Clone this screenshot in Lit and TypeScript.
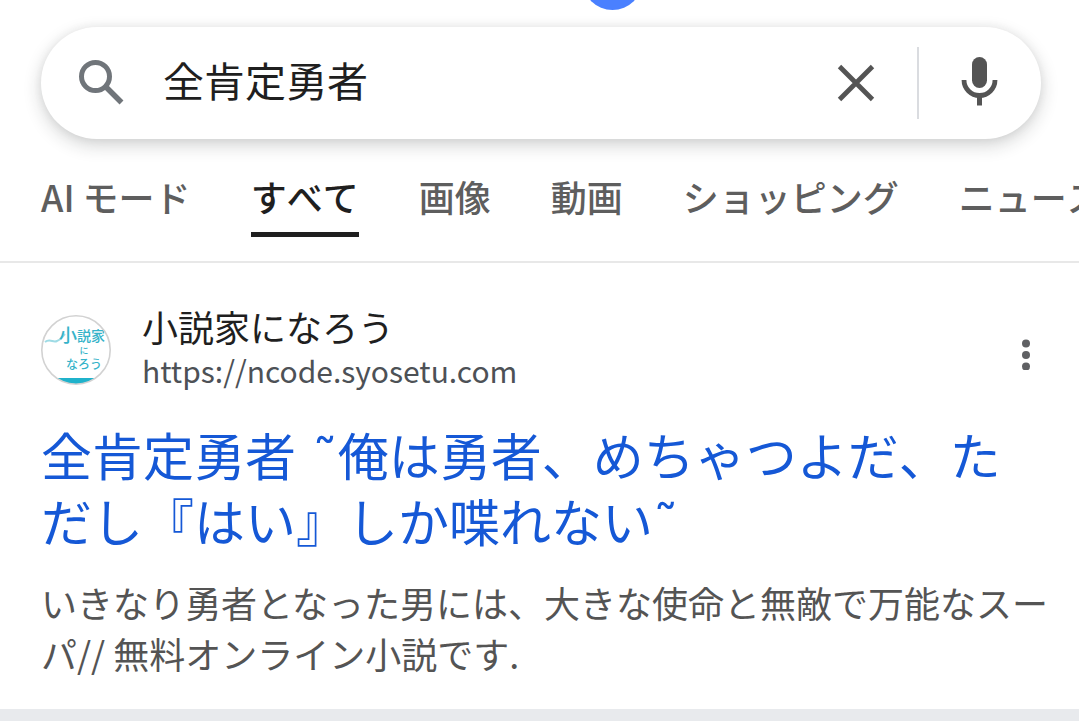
import { LitElement, html, css, svg } from "lit";
import { customElement, property, state } from "lit/decorators.js";

interface Tab {
  label: string;
  active?: boolean;
}

const TABS: Tab[] = [
  { label: "AI モード" },
  { label: "すべて", active: true },
  { label: "画像" },
  { label: "動画" },
  { label: "ショッピング" },
  { label: "ニュース" },
];

@customElement("search-box")
class SearchBox extends LitElement {
  @property() value = "";

  static styles = css`
    :host {
      display: block;
    }
    .box {
      display: flex;
      align-items: center;
      height: 112px;
      box-sizing: border-box;
      padding: 0 32px 0 36px;
      border-radius: 56px;
      background: #fff;
      box-shadow: 0 6px 18px rgba(32, 33, 36, 0.2), 0 0 10px rgba(32, 33, 36, 0.06);
    }
    .icon {
      display: block;
      flex: none;
    }
    .input {
      flex: 1;
      min-width: 0;
      height: 64px;
      margin: 0 0 0 36px;
      padding: 0 0 8px;
      box-sizing: border-box;
      border: 0;
      outline: 0;
      background: transparent;
      color: #1f1f1f;
      font: 400 41px/56px "Noto Sans CJK JP", sans-serif;
    }
    .button {
      display: block;
      flex: none;
      padding: 0;
      border: 0;
      background: none;
    }
    .divider {
      flex: none;
      width: 2px;
      height: 72px;
      margin: 0 33px;
      background: #dadce0;
    }
  `;

  private clear() {
    this.value = "";
  }

  private onInput(e: Event) {
    this.value = (e.target as HTMLInputElement).value;
  }

  render() {
    return html`
      <form class="box" role="search" @submit=${(e: Event) => e.preventDefault()}>
        <svg class="icon" width="50" height="50" viewBox="0 0 50 50" aria-hidden="true">
          <circle cx="18.500" cy="18.500" r="14" fill="none" stroke="#70757a" stroke-width="5" />
          <path d="M28.500 28.500 44.500 44.500" fill="none" stroke="#70757a" stroke-width="5.500" />
        </svg>
        <input class="input" type="text" aria-label="検索" .value=${this.value} @input=${this.onInput} />
        <button class="button" type="button" aria-label="クリア" @click=${this.clear}>
          <svg class="icon" width="56" height="56" viewBox="0 0 56 56">
            <path d="M11.500 11.500 44.500 44.500M44.500 11.500 11.500 44.500" fill="none" stroke="#545454" stroke-width="4.800" />
          </svg>
        </button>
        <span class="divider"></span>
        <button class="button" type="button" aria-label="音声検索">
          <svg class="icon" width="57" height="56" viewBox="0 0 57 56">
            <rect x="20" y="2" width="15" height="31" rx="7.500" fill="#545454" />
            <path d="M12 25a15.500 15.500 0 0 0 31 0" fill="none" stroke="#545454" stroke-width="4.800" />
            <path d="M27.500 41V50.500" stroke="#545454" stroke-width="5" />
          </svg>
        </button>
      </form>
    `;
  }
}

@customElement("search-result")
class SearchResult extends LitElement {
  static styles = css`
    :host {
      display: block;
      font-family: "Noto Sans CJK JP", sans-serif;
    }
    .source {
      display: flex;
      align-items: center;
    }
    .favicon {
      display: block;
      flex: none;
      margin-right: 31px;
    }
    .glyphs {
      fill: #35b3c9;
      font-family: "Noto Sans CJK JP", sans-serif;
      font-weight: 500;
      text-anchor: middle;
    }
    .names {
      flex: 1;
      min-width: 0;
      padding-bottom: 4px;
    }
    .site {
      color: #1f1f1f;
      font-size: 36px;
      line-height: 44px;
    }
    .url {
      color: #4d5156;
      font-size: 30px;
      line-height: 44px;
    }
    .menu {
      flex: none;
      display: block;
      padding: 0;
      border: 0;
      background: none;
    }
    .dots {
      display: block;
    }
    .title {
      margin: 25px 0 0;
      font-size: 51px;
      font-weight: 400;
      line-height: 66px;
      font-kerning: none;
    }
    .link {
      color: #1558d6;
      text-decoration: none;
    }
    .wave {
      font-family: "DejaVu Sans", sans-serif;
      line-height: 1;
    }
    .snippet {
      margin: 24px -20px 0 0;
      color: #545454;
      font-size: 36px;
      line-height: 51px;
    }
  `;

  render() {
    return html`
      <article>
        <div class="source">
          <svg class="favicon" width="70" height="70" viewBox="0 0 70 70" aria-hidden="true">
            <clipPath id="round"><circle cx="35" cy="35" r="34" /></clipPath>
            <g clip-path="url(#round)">
              <rect width="70" height="70" fill="#fff" />
              <rect y="63" width="70" height="7" fill="#1fb2cb" />
              <path d="M4 27c5-4 8 1 12-1 4-1 5-4 8-7" fill="none" stroke="#9edbe5" stroke-width="2" />
            </g>
            <text class="glyphs" x="27" y="27" font-size="18">小</text>
            <text class="glyphs" x="50" y="26" font-size="14">説家</text>
            <text class="glyphs" x="43" y="39" font-size="9">に</text>
            <text class="glyphs" x="43" y="54" font-size="12">なろう</text>
            <circle cx="35" cy="35" r="34.200" fill="none" stroke="#d2d2d2" stroke-width="1.600" />
          </svg>
          <div class="names">
            <div class="site">小説家になろう</div>
            <div class="url">https://ncode.syosetu.com</div>
          </div>
          <button class="menu" type="button" aria-label="この結果について">
            <svg class="dots" width="30" height="40" viewBox="0 0 30 40">
              <g fill="#5f6063">
                <circle cx="15" cy="13.500" r="4" />
                <circle cx="15" cy="25" r="4" />
                <circle cx="15" cy="36.500" r="4" />
              </g>
            </svg>
          </button>
        </div>
        <h3 class="title">
          <a class="link" href="#">全肯定勇者<span class="wave"> ˜</span>俺は勇者、めちゃつよだ、ただし『はい』しか喋れない<span class="wave">˜</span></a>
        </h3>
        <p class="snippet">いきなり勇者となった男には、大きな使命と無敵で万能なスーパ// 無料オンライン小説です.</p>
      </article>
    `;
  }
}

@customElement("app-root")
class AppRoot extends LitElement {
  @state() private query = "全肯定勇者";

  static styles = css`
    :host {
      display: block;
      min-height: 100vh;
      overflow: hidden;
      background: #fff;
      font-family: "Noto Sans CJK JP", sans-serif;
    }
    .logo {
      display: block;
      margin: 0 auto;
    }
    .search {
      margin: 0 38px 0 41px;
    }
    .tabs {
      display: flex;
      gap: 60px;
      margin-top: 31px;
      padding: 0 0 24px 41px;
      overflow: hidden;
      border-bottom: 2px solid #e8e8e8;
    }
    .tab {
      flex: none;
      padding-bottom: 9px;
      border-bottom: 5px solid transparent;
      color: #5e5e5e;
      font-size: 36px;
      font-weight: 500;
      font-kerning: none;
      line-height: 53px;
      text-decoration: none;
      white-space: nowrap;
    }
    .active {
      border-bottom-color: #1f1f1f;
      color: #1f1f1f;
    }
    .result {
      padding: 41px 38px 30px 41px;
    }
    .band {
      height: 12px;
      background: #e8eaed;
    }
  `;

  render() {
    return html`
      <header>
        <svg class="logo" width="200" height="27" viewBox="0 0 200 27" aria-hidden="true">
          ${svg`<circle cx="172.500" cy="-20" r="30" fill="#4a80ff" />`}
        </svg>
        <search-box class="search" .value=${this.query}></search-box>
        <nav class="tabs">
          ${TABS.map(
            (t) => html`<a class="tab ${t.active ? "active" : ""}" href="#">${t.label}</a>`
          )}
        </nav>
      </header>
      <main>
        <search-result class="result"></search-result>
        <div class="band"></div>
      </main>
    `;
  }
}
